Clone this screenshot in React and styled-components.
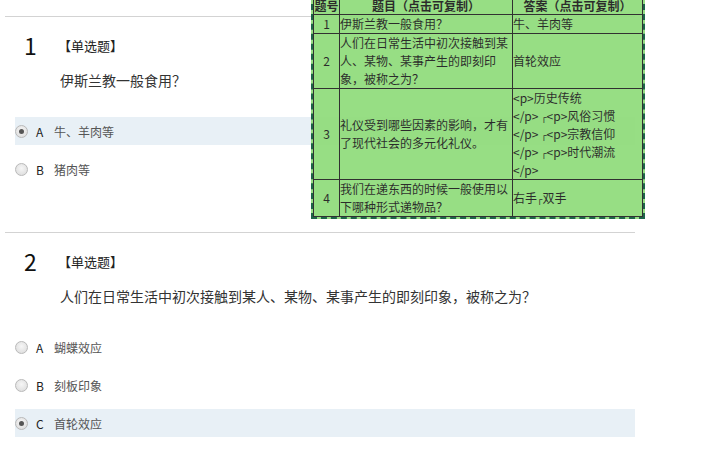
import styled, { createGlobalStyle } from "styled-components";

const GlobalStyle = createGlobalStyle`
    html, body {
        margin: 0;
        padding: 0;
        background: #fff;
    }
    body {
        font-family: "Noto Sans CJK SC", "Noto Sans", sans-serif;
        color: #333;
    }
`;

const questions = [
    {
        no: 1,
        stem: "伊斯兰教一般食用？",
        options: [
            { key: "A", text: "牛、羊肉等", checked: true },
            { key: "B", text: "猪肉等" },
        ],
    },
    {
        no: 2,
        stem: "人们在日常生活中初次接触到某人、某物、某事产生的即刻印象，被称之为？",
        options: [
            { key: "A", text: "蝴蝶效应" },
            { key: "B", text: "刻板印象" },
            { key: "C", text: "首轮效应", checked: true },
        ],
    },
];

const Sep = () => <Mark>┌</Mark>;

// answer sheet rows, lines broken as in the helper popup
const rows = [
    { no: 1, q: ["伊斯兰教一般食用？"], a: ["牛、羊肉等"] },
    {
        no: 2,
        q: ["人们在日常生活中初次接触到某", "人、某物、某事产生的即刻印", "象，被称之为？"],
        a: ["首轮效应"],
    },
    {
        no: 3,
        q: ["礼仪受到哪些因素的影响，才有", "了现代社会的多元化礼仪。"],
        a: [
            "<p>历史传统",
            <>&lt;/p&gt; <Sep />&lt;p&gt;风俗习惯</>,
            <>&lt;/p&gt; <Sep />&lt;p&gt;宗教信仰</>,
            <>&lt;/p&gt; <Sep />&lt;p&gt;时代潮流</>,
            "</p>",
        ],
    },
    {
        no: 4,
        q: ["我们在递东西的时候一般使用以", "下哪种形式递物品？"],
        a: [<>右手<Sep />双手</>],
    },
];

const Lines = ({ list }) =>
    list.map((l, i) => (
        <span key={i}>
            {l}
            {i < list.length - 1 && <br />}
        </span>
    ));

const App = () => {
    return (
        <Wrapper>
            <GlobalStyle />
            <Page>
                {questions.map((q) => (
                    <Question key={q.no}>
                        <Head>
                            <Number>{q.no}</Number>
                            <Type>【单选题】</Type>
                        </Head>
                        <Stem>{q.stem}</Stem>
                        <Options>
                            {q.options.map((o) => (
                                <Option key={o.key} $checked={o.checked}>
                                    <Radio $checked={o.checked} />
                                    <Letter>{o.key}</Letter>
                                    <OptionText>{o.text}</OptionText>
                                </Option>
                            ))}
                        </Options>
                    </Question>
                ))}
            </Page>

            <AnswerBox>
                <Table>
                    <colgroup>
                        <col style={{ width: 26 }} />
                        <col style={{ width: 173 }} />
                        <col />
                    </colgroup>
                    <thead>
                        <tr>
                            <Th>题号</Th>
                            <Th>题目（点击可复制）</Th>
                            <Th>答案（点击可复制）</Th>
                        </tr>
                    </thead>
                    <tbody>
                        {rows.map((r) => (
                            <tr key={r.no}>
                                <Td $center>{r.no}</Td>
                                <Td><Lines list={r.q} /></Td>
                                <Td><Lines list={r.a} /></Td>
                            </tr>
                        ))}
                    </tbody>
                </Table>
            </AnswerBox>
        </Wrapper>
    );
};

const Wrapper = styled.div`
    position: relative;
    width: 707px;
    height: 461px;
    overflow: hidden;
`;

const Page = styled.div`
    width: 630px;
    padding: 16px 0 0 5px;
`;

const Question = styled.div`
    border-top: 1px solid #d3d3d3;
    padding: 14px 0 49px 0;
`;

const Head = styled.div`
    display: flex;
    align-items: center;
    height: 28px;
`;

const Number = styled.div`
    width: 34px;
    padding-left: 19px;
    font-size: 23px;
    line-height: 28px;
    color: #111;
`;

const Type = styled.div`
    font-size: 13px;
    color: #222;
`;

const Stem = styled.div`
    margin-top: 11px;
    padding-left: 55px;
    font-size: 14px;
    line-height: 20px;
    color: #333;
`;

const Options = styled.div`
    margin: 27px 0 0 10px;
    display: flex;
    flex-direction: column;
    gap: 10px;
`;

const Option = styled.div`
    height: 28px;
    display: flex;
    align-items: center;
    background: ${(p) => (p.$checked ? "#e8f0f6" : "transparent")};
    font-size: 12px;
`;

const Radio = styled.span`
    position: relative;
    width: 11px;
    height: 11px;
    border-radius: 50%;
    border: 1px solid #b9b9b9;
    background: radial-gradient(circle at 50% 40%, #f6f6f6, #d9d9d9);
    box-sizing: content-box;

    &::after {
        content: '';
        display: ${(p) => (p.$checked ? "block" : "none")};
        position: absolute;
        left: 3px;
        top: 3px;
        width: 5px;
        height: 5px;
        border-radius: 50%;
        background: #555;
    }
`;

const Letter = styled.span`
    margin-left: 8px;
    width: 18px;
    color: #222;
`;

const OptionText = styled.span`
    color: #555;
`;

const AnswerBox = styled.div`
    position: absolute;
    left: 311px;
    top: -6px;
    width: 330px;
    border: 2px dashed #0c5a3c;
    background: #90dc7b;
    opacity: 0.93;
`;

const Table = styled.table`
    width: 330px;
    table-layout: fixed;
    border-collapse: collapse;
    font-size: 12px;
    line-height: 18px;
    color: #1c1c1c;
`;

const Th = styled.th`
    border: 1px solid #222;
    padding: 0;
    height: 17px;
    line-height: 17px;
    font-weight: bold;
    text-align: center;
    white-space: nowrap;
    overflow: hidden;
`;

const Td = styled.td`
    border: 1px solid #222;
    padding: 0;
    vertical-align: middle;
    text-align: ${(p) => (p.$center ? "center" : "left")};
    white-space: nowrap;
`;

const Mark = styled.span`
    font-family: "DejaVu Sans", sans-serif;
    font-size: 9px;
    line-height: 0;
`;

export default App;
